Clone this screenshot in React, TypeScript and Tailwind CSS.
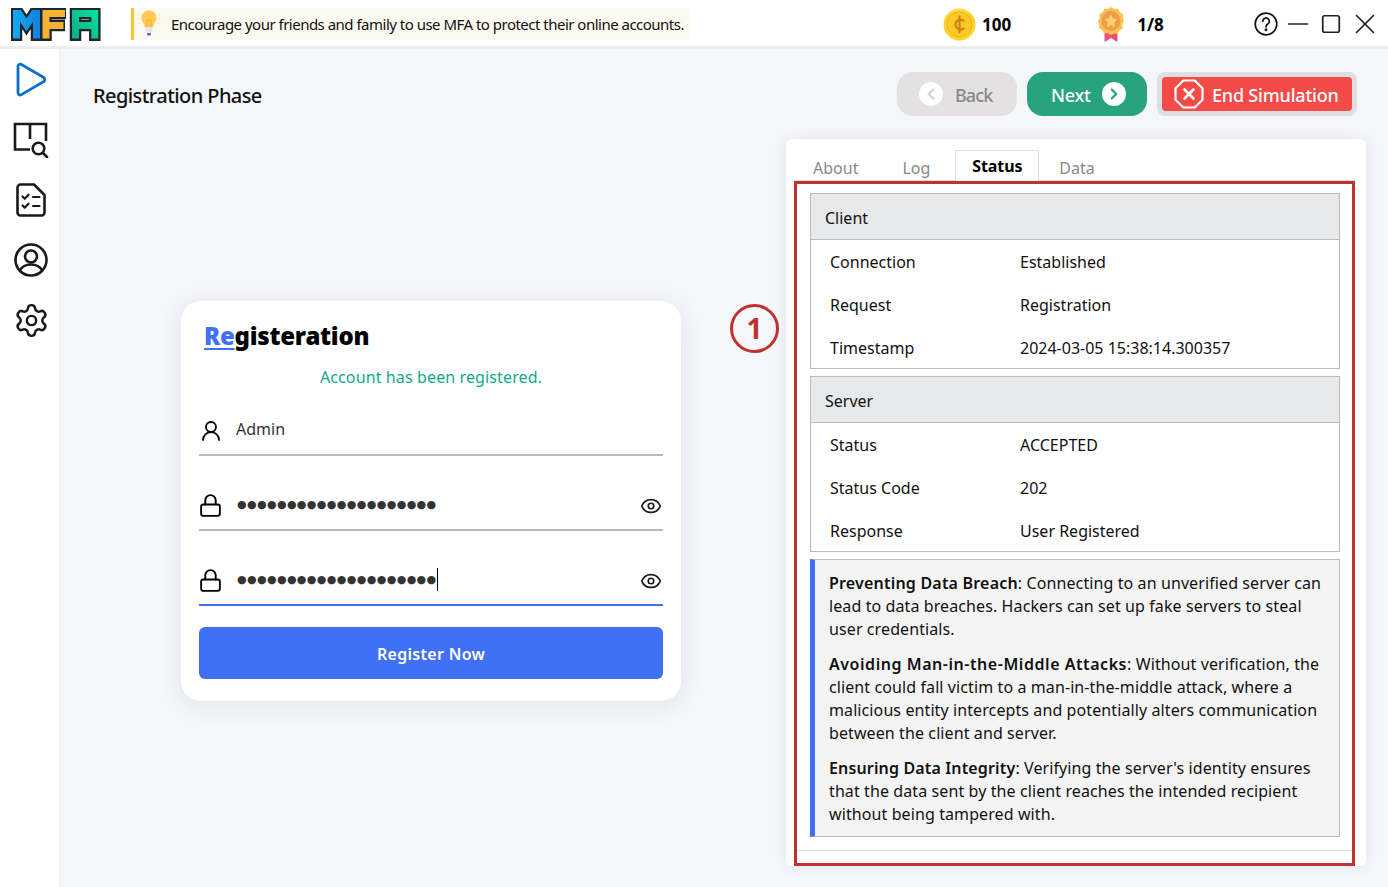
import * as React from "react"
import { ChevronLeft, ChevronRight, Eye, Lock, Minus, Settings, Square, UserRound, X } from "lucide-react"

// ── Drawn icons ───────────────────────────────────────────────────────────────

function MfaLogo() {
  return (
    <svg width="90" height="33" viewBox="0 0 90 33" aria-label="MFA logo">
      <defs>
        <linearGradient id="mBlue" x1="0" y1="0" x2="1" y2="0">
          <stop offset="0" stopColor="#12a7ef" />
          <stop offset="1" stopColor="#1485dc" />
        </linearGradient>
        <linearGradient id="aGreen" x1="0" y1="1" x2="1" y2="0">
          <stop offset="0" stopColor="#0fae7f" />
          <stop offset="1" stopColor="#08dca0" />
        </linearGradient>
      </defs>
      <g fill="none" strokeLinejoin="miter" strokeLinecap="butt">
        <g stroke="#1c2630" strokeWidth="11.500">
          <path d="M5.500 33V5.500H8L15.500 17L23 5.500H25.500V33" />
          <path d="M35 33V5.500H55M35 17.500H54" />
          <path d="M64.500 33V5.500H83.800V33M64.500 17.500H83.800" />
        </g>
        <g strokeWidth="7">
          <path d="M5.500 30.500V5.500H8L15.500 17L23 5.500H25.500V30.500" stroke="url(#mBlue)" />
          <path d="M35 30.500V5.500H54M35 17.500H52.500" stroke="#f6b234" />
          <path d="M64.500 30.500V5.500H83.800V30.500M64.500 17.500H83.800" stroke="url(#aGreen)" />
        </g>
      </g>
    </svg>
  )
}

function BulbIcon() {
  return (
    <svg width="24" height="30" viewBox="0 0 24 30">
      <g stroke="#fde3a7" strokeWidth="1" strokeLinecap="round">
        <path d="M1 6h2M1 10h2M1 14h2M21 6h2M21 10h2M21 14h2" />
      </g>
      <path d="M12 1.500c-4.500 0-7.500 3.500-7.500 7.500 0 4 3 5.500 3.500 9.500h8c.5-4 3.500-5.500 3.500-9.500 0-4-3-7.500-7.500-7.500z" fill="#fecb56" />
      <path d="M10 18V11h4v7" fill="none" stroke="#f5ae37" strokeWidth="1" />
      <rect x="8.500" y="18.500" width="7" height="5" fill="#e9e5ec" />
      <rect x="10" y="24" width="4" height="2.500" rx="1" fill="#6d5cc0" />
    </svg>
  )
}

function CoinIcon() {
  return (
    <svg width="33" height="33" viewBox="0 0 33 33">
      <circle cx="16.500" cy="16.500" r="16" fill="#fdd22b" />
      <path d="M4 8a16 16 0 0 1 25 0a15 15 0 0 0-25 0z" fill="#ffe88f" />
      <circle cx="16.500" cy="16.500" r="12.500" fill="#fcc927" stroke="#efb21d" strokeWidth="1" />
      <path d="M20.500 12.500a5 5 0 1 0 0 8M16.500 8.500v16" fill="none" stroke="#c98414" strokeWidth="2.200" strokeLinecap="round" />
    </svg>
  )
}

function MedalIcon() {
  return (
    <svg width="26" height="36" viewBox="0 0 28 36" preserveAspectRatio="none">
      <path d="M7 22h14v14l-7-4-7 4z" fill="#ee4f76" />
      <path d="M14 1l3.500 2 4-.300 2 3.500 3.500 2-.300 4L28 15l-1.800 3.500.300 4-3.500 2-2 3.500-4-.300L14 29l-3.500-1.800-4 .300-2-3.500-3.500-2 .300-4L0 15l1.800-2.800-.300-4 3.500-2 2-3.500 4 .300z" fill="#f8c24c" />
      <circle cx="14" cy="15" r="10" fill="#ee9c4e" />
      <path d="M14 8l2.200 4.500 4.800.600-3.500 3.400.900 4.900-4.400-2.400-4.400 2.400.900-4.900L7 13.100l4.800-.600z" fill="#fcd36c" />
    </svg>
  )
}

function PlayIcon() {
  return (
    <svg width="32" height="36" viewBox="0 0 32 36" fill="none" stroke="#0a6fc8" strokeWidth="2.800" strokeLinejoin="round">
      <path d="M3 4.500c0-2 1.800-2.900 3.400-2l22 12.800c1.800 1 1.800 3.500 0 4.500l-22 12.800c-1.600.900-3.400 0-3.400-2z" />
    </svg>
  )
}

function BookSearchIcon() {
  return (
    <svg width="36" height="36" viewBox="0 0 36 36" fill="none" stroke="#1a1a1a" strokeWidth="2.600">
      <path d="M17 27.500H2V2h15v15M17 2h16v17" />
      <circle cx="25.500" cy="26.500" r="5.800" />
      <path d="M30 31l4 4" strokeLinecap="round" />
    </svg>
  )
}

function ChecklistIcon() {
  return (
    <svg width="30" height="34" viewBox="0 0 30 34" fill="none" stroke="#1a1a1a" strokeWidth="2.600" strokeLinejoin="round" strokeLinecap="round">
      <path d="M4.500 1.500H18L28.500 12v17.500a3 3 0 0 1-3 3h-21a3 3 0 0 1-3-3v-25a3 3 0 0 1 3-3z" />
      <path d="M6.500 13.500l2.200 2.200 3.800-4M6.500 22.500l2.200 2.200 3.800-4M17 14h6.500M17 23h6.500" strokeWidth="2.200" />
    </svg>
  )
}

function AccountIcon() {
  return (
    <svg width="34" height="34" viewBox="0 0 34 34" fill="none" stroke="#1a1a1a" strokeWidth="2.600">
      <circle cx="17" cy="17" r="15.500" />
      <circle cx="17" cy="13.500" r="6" />
      <path d="M5.800 27.500C8 23.500 12 21.500 17 21.500s9 2 11.200 6" />
    </svg>
  )
}

function HelpIcon() {
  return (
    <svg width="24" height="24" viewBox="0 0 24 24" fill="none" stroke="#111" strokeWidth="1.700">
      <circle cx="12" cy="12" r="10.800" />
      <path d="M8.800 9.300a3.300 3.300 0 1 1 5 2.800c-1.200.7-1.800 1.300-1.800 2.700" strokeLinecap="round" />
      <circle cx="12" cy="17.800" r=".6" fill="#111" />
    </svg>
  )
}

function StopIcon() {
  return (
    <svg width="30" height="30" viewBox="0 0 30 30" fill="none" stroke="#fff" strokeWidth="2.200">
      <path d="M9.300 1.500h11.400l7.800 7.800v11.400l-7.800 7.800H9.300l-7.800-7.800V9.300z" strokeLinejoin="round" />
      <path d="M10.500 10.500l9 9M19.500 10.500l-9 9" strokeWidth="2.600" strokeLinecap="round" />
    </svg>
  )
}

// ── Registration form ─────────────────────────────────────────────────────────

function Field({ icon, active, children }: { icon: React.ReactNode; active?: boolean; children: React.ReactNode }) {
  return (
    <div className={`flex h-[50px] items-center border-b-2 ${active ? "border-[#4070f4]" : "border-[#bbbbbb]"}`}>
      <div className="flex w-[37px] shrink-0">{icon}</div>
      {children}
    </div>
  )
}

function PasswordValue({ caret }: { caret?: boolean }) {
  return (
    <>
      <span className="ml-px font-['DejaVu_Sans',sans-serif] text-[11px] leading-none tracking-[0.38px] text-[#333333]">{"●".repeat(20)}</span>
      {caret && <span className="h-[23px] w-px bg-black" />}
      <Eye className="ml-auto mr-[1px] mt-[2px] size-[22px] text-[#1a1a1a]" strokeWidth={1.8} />
    </>
  )
}

function RegisterCard() {
  return (
    <div className="h-[400px] w-[500px] rounded-[20px] bg-white px-[18px] pt-[19px] shadow-[0_4px_24px_rgba(60,70,110,0.10)]">
      <h1 className="pl-[5px] text-[24px] font-black leading-[32px] tracking-[-0.25px] text-black">
        <span className="text-[#4070f4] underline decoration-2 underline-offset-[3px]">Re</span>gisteration
      </h1>
      <p className="mt-[13px] text-center text-[16px] leading-[24px] tracking-[0.12px] text-[#10a98f]">Account has been registered.</p>
      <div className="mt-[17px] flex flex-col gap-[25px]">
        <Field icon={<UserRound className="mt-[3px] size-[24px] text-black" strokeWidth={1.8} />}>
          <span className="mb-[2px] text-[16px] text-[#333333]">Admin</span>
        </Field>
        <Field icon={<Lock className="mt-[2px] size-[25px] -translate-x-[1px] text-black" strokeWidth={1.8} />}>
          <PasswordValue />
        </Field>
        <Field active icon={<Lock className="mt-[2px] size-[25px] -translate-x-[1px] text-black" strokeWidth={1.8} />}>
          <PasswordValue caret />
        </Field>
      </div>
      <button className="mt-[21px] h-[52px] w-full rounded-[6px] bg-[#4070f4] pt-[2px] text-[16px] font-semibold tracking-[0.3px] text-white">Register Now</button>
    </div>
  )
}

// ── Status panel ──────────────────────────────────────────────────────────────

function InfoTable({ title, rows }: { title: string; rows: [string, string][] }) {
  return (
    <div className="h-[176px] border border-[#bbbbbb] bg-white">
      <div className="flex h-[46px] items-center border-b border-[#bbbbbb] bg-[#e8e9eb] pl-[14px] pt-[2px] text-[16px] text-[#111111]">{title}</div>
      {rows.map(([label, value]) => (
        <div key={label} className="flex h-[43px] items-center pl-[19px] text-[16px] text-[#111111]">
          <span className="w-[190px]">{label}</span>
          <span>{value}</span>
        </div>
      ))}
    </div>
  )
}

function StatusPanel() {
  return (
    <div className="relative h-[727px] w-[580px] rounded-[6px] bg-white pt-[11px] shadow-[0_0_14px_rgba(60,70,110,0.10)]">
      <div className="mx-[10px] flex h-[31px] items-end border-b border-[#dddddd] text-[16px] text-[#888888]">
        <span className="ml-[17px]">About</span>
        <span className="ml-[44px]">Log</span>
        <span className="-mb-px ml-[25px] flex h-[31px] w-[84px] items-center justify-center border border-b-0 border-[#dddddd] bg-white font-bold tracking-[-0.1px] text-black">Status</span>
        <span className="ml-[20px]">Data</span>
      </div>
      <div className="mx-[24px] mt-[12px] flex w-[530px] flex-col gap-[7px]">
        <InfoTable
          title="Client"
          rows={[
            ["Connection", "Established"],
            ["Request", "Registration"],
            ["Timestamp", "2024-03-05 15:38:14.300357"],
          ]}
        />
        <InfoTable
          title="Server"
          rows={[
            ["Status", "ACCEPTED"],
            ["Status Code", "202"],
            ["Response", "User Registered"],
          ]}
        />
        <div className="flex flex-col gap-[12px] border border-l-[5px] border-[#bbbbbb] border-l-[#4070f4] bg-[#f4f4f5] pb-[10px] pl-[14px] pr-[12px] pt-[12px] text-[16px] leading-[23px] tracking-[0.1px] text-[#111111]">
          <p><b className="font-semibold tracking-[0.2px]">Preventing Data Breach</b>: Connecting to an unverified server can lead to data breaches. Hackers can set up fake servers to steal user credentials.</p>
          <p><b className="font-semibold tracking-[0.55px]">Avoiding Man-in-the-Middle Attacks</b>: Without verification, the client could fall victim to a man-in-the-middle attack, where a malicious entity intercepts and potentially alters communication between the client and server.</p>
          <p><b className="font-semibold tracking-[0.15px]">Ensuring Data Integrity</b>: Verifying the server's identity ensures that the data sent by the client reaches the intended recipient without being tampered with.</p>
        </div>
      </div>
      <div className="mx-[10px] mt-[13px] border-t border-[#dddddd]" />
      {/* annotation overlay */}
      <div className="pointer-events-none absolute left-[8px] top-[42px] h-[685px] w-[561px] border-[3px] border-[#c03232]" />
      <div className="absolute -left-[56px] top-[165px] flex size-[49px] items-center justify-center rounded-full border-[3px] border-[#c03232] pb-[2px] text-[28px] font-bold leading-none text-[#c03232]">1</div>
    </div>
  )
}

// ── Page ──────────────────────────────────────────────────────────────────────

export default function App() {
  return (
    <div className="flex h-[887px] w-[1388px] flex-col overflow-hidden bg-white font-['Noto_Sans',sans-serif]">
      <header className="flex h-[49px] shrink-0 items-center border-b-[3px] border-[#eeeeee] bg-white pt-[2px]">
        <div className="ml-[11px] flex"><MfaLogo /></div>
        <div className="ml-[30px] flex h-[32px] w-[559px] items-center border-l-[3px] border-[#fbc531] bg-[#fcf9f1]">
          <span className="ml-[3px] flex"><BulbIcon /></span>
          <span className="ml-[10px] whitespace-nowrap text-[15px] tracking-[-0.51px] text-[#111111]">Encourage your friends and family to use MFA to protect their online accounts.</span>
        </div>
        <div className="ml-[253px] flex"><CoinIcon /></div>
        <span className="ml-[6px] mt-[2px] text-[17px] font-bold text-black">100</span>
        <div className="ml-[87px] flex"><MedalIcon /></div>
        <span className="ml-[13px] mt-[2px] text-[17px] font-bold text-black">1/8</span>
        <div className="ml-[90px] flex"><HelpIcon /></div>
        <Minus className="ml-[4px] size-[32px] shrink-0 text-[#222222]" strokeWidth={1.3} />
        <Square className="ml-[6px] size-[22px] shrink-0 text-[#222222]" strokeWidth={1.9} />
        <X className="ml-[6px] size-[34px] shrink-0 text-[#222222]" strokeWidth={1.2} />
      </header>
      <div className="flex min-h-0 flex-1">
        <aside className="flex w-[60px] shrink-0 flex-col items-center border-r border-[#eeeef2] bg-white pl-[3px] pt-[13px]">
          <PlayIcon />
          <div className="mt-[24px] flex"><BookSearchIcon /></div>
          <div className="mt-[25px] flex"><ChecklistIcon /></div>
          <div className="mt-[26px] flex"><AccountIcon /></div>
          <Settings className="mt-[25px] size-[37px] text-[#1a1a1a]" strokeWidth={1.6} />
        </aside>
        <main className="flex-1 bg-[#f5f6fa] pl-[33px] pr-[22px] pt-[23px]">
          <div className="flex h-[44px] items-center">
            <h2 className="mt-[4px] text-[20px] font-medium tracking-[-0.58px] text-[#111111]">Registration Phase</h2>
            <div className="ml-auto mr-[9px] flex gap-[10px]">
              <button className="flex h-[44px] w-[120px] items-center rounded-[16px] bg-[#e3e1e1] pl-[22px] text-[18px] font-medium text-[#888888]">
                <span className="flex size-[24px] items-center justify-center rounded-full bg-white"><ChevronLeft className="size-[18px] text-[#d4d2d2]" strokeWidth={3} /></span>
                <span className="ml-[12px] mt-[2px] tracking-[-0.9px]">Back</span>
              </button>
              <button className="flex h-[44px] w-[120px] items-center rounded-[16px] bg-[#28a47c] pl-[24px] text-[18px] font-medium tracking-[-0.2px] text-white">
                <span className="mt-[2px]">Next</span>
                <span className="ml-[11px] flex size-[24px] items-center justify-center rounded-full bg-white"><ChevronRight className="size-[18px] text-[#28a47c]" strokeWidth={3} /></span>
              </button>
              <div className="flex h-[44px] w-[200px] rounded-[8px] bg-[#e0dfdf] p-[5px]">
                <button className="flex flex-1 items-center rounded-[4px] bg-[#f44a48] pl-[12px] text-[18px] font-medium tracking-[-0.2px] text-white">
                  <StopIcon />
                  <span className="ml-[8px] mt-[2px] whitespace-nowrap">End Simulation</span>
                </button>
              </div>
            </div>
          </div>
          <div className="mt-[23px] flex items-center justify-between">
            <div className="pb-[4px] pl-[88px]"><RegisterCard /></div>
            <StatusPanel />
          </div>
        </main>
      </div>
    </div>
  )
}
